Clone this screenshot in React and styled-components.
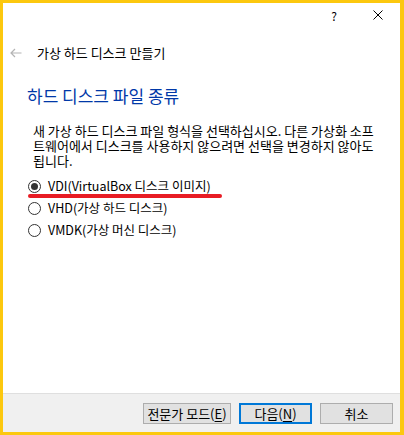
import React from 'react';
import styled, { createGlobalStyle } from 'styled-components';

const Global = createGlobalStyle`
    html, body {
        margin: 0;
        padding: 0;
    }
    body {
        width: 404px;
        height: 435px;
        box-sizing: border-box;
        padding: 3px 4px 3px 3px;
        background: #fcc80f;
        font-family: "Noto Sans CJK KR", "Liberation Sans", sans-serif;
        font-size: 13px;
        color: #000;
    }
`;

const Window = styled.div`
    position: relative;
    display: flex;
    flex-direction: column;
    width: 397px;
    height: 429px;
    background: #fff;
`;

const TitleBar = styled.div`
    display: flex;
    justify-content: flex-end;
    align-items: center;
    height: 24px;
`;

const CaptionButton = styled.div`
    display: flex;
    align-items: center;
    justify-content: center;
    width: ${({w}) => w + 'px'};
    height: 24px;
    font-size: 12px;
    color: #000;
`;

const Header = styled.div`
    display: flex;
    align-items: center;
    height: 24px;
    margin-top: 14px;
    padding-left: 7px;
`;

const Back = styled.div`
    display: flex;
    align-items: center;
    width: 27px;
`;

const HeaderTitle = styled.div`
    font-size: 13px;
    line-height: 24px;
    color: #000;
`;

const Content = styled.div`
    flex: 1;
    padding: 21px 0 0 24px;
`;

const Heading = styled.div`
    font-size: 17px;
    line-height: 20px;
    color: #0038a8;
`;

const Paragraph = styled.div`
    margin: 17px 0 0 6px;
    font-size: 13px;
    line-height: 15px;
    > span {
        display: block;
        height: 15px;
        white-space: nowrap;
    }
`;

const RadioGroup = styled.div`
    position: relative;
    margin-top: 7px;
    display: flex;
    flex-direction: column;
`;

const RadioRow = styled.label`
    display: flex;
    align-items: center;
    height: 22px;
    padding-left: 1px;
    gap: 7px;
    font-size: 12.5px;
    line-height: 22px;
`;

const RadioDot = styled.span`
    position: relative;
    display: inline-block;
    box-sizing: border-box;
    width: 13px;
    height: 13px;
    border: 1px solid #333;
    border-radius: 50%;
    background: #fff;

    &::after {
        content: '';
        display: ${({checked}) => checked ? 'block' : 'none'};
        position: absolute;
        left: 2px;
        top: 2px;
        width: 7px;
        height: 7px;
        border-radius: 50%;
        background: #333;
    }
`;

const Mark = styled.div`
    position: absolute;
    left: 1px;
    top: 19px;
    width: 194px;
    height: 4px;
    border-radius: 2px;
    background: #e81c24;
`;

const Footer = styled.div`
    display: flex;
    justify-content: flex-end;
    gap: 8px;
    padding: 9px 7px 0 0;
    box-sizing: content-box;
    border-top: 1px solid #dfdfdf;
    background: #f0f0f0;
    height: 29px;
`;

const Button = styled.div`
    display: flex;
    align-items: center;
    justify-content: center;
    box-sizing: border-box;
    width: ${({w}) => w + 'px'};
    height: 21px;
    background: #e1e1e1;
    border: ${({primary}) => primary ? '2px solid #0078d7' : '1px solid #adadad'};
    font-size: 13px;
    color: #000;

    u {
        text-decoration: underline;
        text-underline-offset: 2px;
    }
`;

function App() {
    return (
        <Window>
            <Global />
            <TitleBar>
                <CaptionButton w={44}>?</CaptionButton>
                <CaptionButton w={44}>
                    <svg width="10" height="10" viewBox="0 0 10 10">
                        <path d="M0.5 0.5 L9.5 9.5 M9.5 0.5 L0.5 9.5" stroke="#000" strokeWidth="1" fill="none" />
                    </svg>
                </CaptionButton>
            </TitleBar>
            <Header>
                <Back>
                    <svg width="12" height="10" viewBox="0 0 12 10">
                        <path d="M11.5 5 H1 M5 1 L1 5 L5 9" stroke="#b4b4b4" strokeWidth="1.2" fill="none" />
                    </svg>
                </Back>
                <HeaderTitle>가상 하드 디스크 만들기</HeaderTitle>
            </Header>
            <Content>
                <Heading>하드 디스크 파일 종류</Heading>
                <Paragraph>
                    <span>새 가상 하드 디스크 파일 형식을 선택하십시오. 다른 가상화 소프</span>
                    <span>트웨어에서 디스크를 사용하지 않으려면 선택을 변경하지 않아도</span>
                    <span>됩니다.</span>
                </Paragraph>
                <RadioGroup>
                    <RadioRow><RadioDot checked />VDI(VirtualBox 디스크 이미지)</RadioRow>
                    <RadioRow><RadioDot />VHD(가상 하드 디스크)</RadioRow>
                    <RadioRow><RadioDot />VMDK(가상 머신 디스크)</RadioRow>
                    <Mark />
                </RadioGroup>
            </Content>
            <Footer>
                <Button w={88}>전문가 모드(<u>E</u>)</Button>
                <Button w={73} primary>다음(<u>N</u>)</Button>
                <Button w={73}>취소</Button>
            </Footer>
        </Window>
    );
}

export default App;
